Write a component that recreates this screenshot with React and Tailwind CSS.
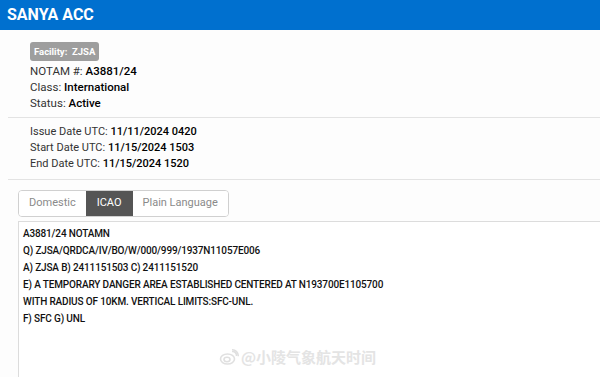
import React from "react";

const tabs = ["Domestic", "ICAO", "Plain Language"];

const lines = [
  "A3881/24 NOTAMN",
  "Q) ZJSA/QRDCA/IV/BO/W/000/999/1937N11057E006",
  "A) ZJSA B) 2411151503 C) 2411151520",
  "E) A TEMPORARY DANGER AREA ESTABLISHED CENTERED AT N193700E1105700",
  "WITH RADIUS OF 10KM. VERTICAL LIMITS:SFC-UNL.",
  "F) SFC G) UNL",
];

function Field({ label, value }) {
  return (
    <p className="h-[16px] leading-[16px]">
      <span className="text-[#333]">{label}</span>{" "}
      <span className="font-medium text-black">{value}</span>
    </p>
  );
}

export default function App() {
  return (
    <div className="relative w-[600px] h-[377px] overflow-hidden bg-[#fdfdfd] font-['Roboto','Liberation_Sans',sans-serif]">
      {/* Header */}
      <div className="h-[30px] bg-[#0070cf] px-[7px] flex items-center">
        <h1 className="text-white text-[16px] font-bold">SANYA ACC</h1>
      </div>

      {/* Summary */}
      <div className="pl-[30px] pt-[12px] pb-[6px] text-[11.5px]">
        <span className="inline-block rounded-[3px] bg-[#9e9e9e] px-[4px] h-[19px] leading-[19px] text-[9.5px] font-bold text-white">
          Facility:&nbsp; ZJSA
        </span>
        <div className="mt-[2px]">
          <Field label="NOTAM #:" value="A3881/24" />
          <Field label="Class:" value="International" />
          <Field label="Status:" value="Active" />
        </div>
      </div>
      <div className="ml-[8px] border-t border-[#e3e3e3]" />

      {/* Dates */}
      <div className="pl-[30px] pt-[6px] pb-[7px] text-[11px]">
        <Field label="Issue Date UTC:" value="11/11/2024 0420" />
        <Field label="Start Date UTC:" value="11/15/2024 1503" />
        <Field label="End Date UTC:" value="11/15/2024 1520" />
      </div>
      <div className="ml-[8px] border-t border-[#e3e3e3]" />

      {/* Tabs */}
      <div className="pl-[18px] pt-[9px]">
        <div className="inline-flex h-[27px] rounded-[4px] border border-[#d0d0d0] overflow-hidden text-[11px]">
          {tabs.map((t) => (
            <div
              key={t}
              className={
                t === "ICAO"
                  ? "flex items-center px-[11px] bg-[#555555] text-white"
                  : t === "Domestic"
                  ? "flex items-center px-[10px] bg-white text-[#8a8a8a]"
                  : "flex items-center px-[10px] bg-white text-[#8a8a8a]"
              }
            >
              {t}
            </div>
          ))}
        </div>
      </div>

      {/* Content */}
      <div className="ml-[18px] mt-[4px] h-[200px] border-l border-t border-[#dcdcdc] bg-white pl-[4px] pt-[3px] text-[10px] tracking-[-0.15px] font-medium text-[#111]">
        {lines.map((l) => (
          <p key={l} className="h-[17px] leading-[17px] whitespace-nowrap">
            {l}
          </p>
        ))}
      </div>

      {/* Watermark */}
      <div className="absolute left-[219px] top-[346px] flex items-center gap-[2px] text-[15px] font-bold text-[#e4e4e4] font-['Noto_Sans_CJK_SC',sans-serif]">
        <svg width="20" height="16" viewBox="0 0 20 16" fill="none" stroke="#e0e0e0" strokeWidth="1.6">
          <ellipse cx="8.5" cy="10" rx="7" ry="5" />
          <ellipse cx="8" cy="10.5" rx="3" ry="2.2" />
          <path d="M13 2.5a4 4 0 0 1 4.5 4.5" />
          <path d="M13 0.8a6 6 0 0 1 6.2 6.4" />
        </svg>
        <span>@小陵气象航天时间</span>
      </div>
    </div>
  );
}
